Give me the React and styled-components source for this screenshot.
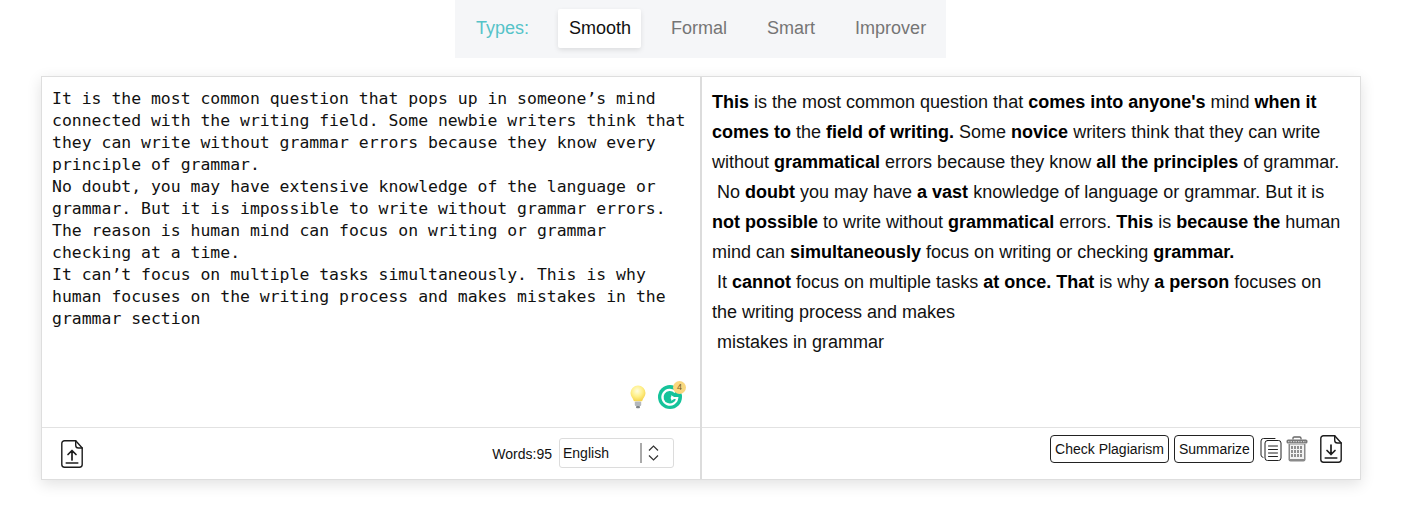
import React from "react";
import styled, { createGlobalStyle } from "styled-components";

const GlobalStyle = createGlobalStyle`
  html, body {
    margin: 0;
    padding: 0;
    background: #fff;
    font-family: "Liberation Sans", Arial, sans-serif;
  }
`;

const Page = styled.div`
  width: 1402px;
  height: 507px;
  overflow: hidden;
  display: flex;
  flex-direction: column;
  align-items: center;
`;

const TypeBar = styled.div`
  width: 491px;
  height: 58px;
  box-sizing: border-box;
  margin-right: 1px;
  background: #f5f6f8;
  display: flex;
  align-items: center;
  padding: 0 0 2px 21px;
  font-size: 18px;
`;

const TypeLabel = styled.span`
  color: #55c3c8;
  margin-right: 29px;
`;

const TypeTab = styled.button`
  border: 0;
  font: inherit;
  height: 39px;
  padding: 0 10px 0 11px;
  margin-right: 19px;
  border-radius: 2px;
  background: ${(p) => (p.$active ? "#fff" : "transparent")};
  color: ${(p) => (p.$active ? "#111" : "#757575")};
  box-shadow: ${(p) => (p.$active ? "0 2px 5px rgba(0,0,0,.1)" : "none")};
`;

const Editor = styled.div`
  width: 1320px;
  height: 404px;
  margin-top: 18px;
  box-sizing: border-box;
  border: 1px solid #dedede;
  background: #fff;
  box-shadow: 0 4px 14px rgba(0, 0, 0, 0.12);
  display: grid;
  grid-template-columns: 658px 1fr;
`;

const Pane = styled.div`
  display: flex;
  flex-direction: column;
  min-width: 0;
  border-left: ${(p) => (p.$right ? "2px solid #dcdcdc" : "none")};
`;

const Body = styled.div`
  height: 350px;
  box-sizing: border-box;
  position: relative;
`;

const Source = styled.div`
  padding: 11px 9px 0 10px;
  font-family: "DejaVu Sans Mono", monospace;
  font-size: 16.45px;
  line-height: 22px;
  color: #111;
`;

const Result = styled.div`
  padding: 10px 12px 0 10px;
  font-size: 18px;
  line-height: 30px;
  color: #111;
`;

const Para = styled.p`
  margin: 0;
  white-space: pre-wrap;
`;

const Changed = styled.b`
  color: #000;
`;

const Hint = styled.div`
  position: absolute;
  right: 18px;
  bottom: 18px;
  display: flex;
  align-items: center;
  gap: 12px;
`;

const GrammarBadge = styled.div`
  position: relative;
  width: 24px;
  height: 24px;
`;

const Count = styled.span`
  position: absolute;
  top: -4px;
  right: -4px;
  width: 13px;
  height: 13px;
  border-radius: 50%;
  background: #f9d77e;
  color: #7a5a1e;
  font-size: 9px;
  line-height: 13px;
  text-align: center;
`;

const Footer = styled.div`
  flex: 1;
  border-top: 1px solid #e2e2e2;
  display: flex;
  align-items: center;
  padding: ${(p) =>
    p.$right ? "0 18px 10px 0" : "0 26px 0 19px"};
  justify-content: ${(p) => (p.$right ? "flex-end" : "space-between")};
  font-size: 14px;
  color: #111;
`;

const WordRow = styled.div`
  display: flex;
  align-items: center;
  gap: 7px;
`;

const LangSelect = styled.div`
  width: 115px;
  height: 30px;
  box-sizing: border-box;
  margin-top: -2px;
  border: 1px solid #dcdcdc;
  border-radius: 3px;
  display: flex;
  align-items: center;
  padding-left: 3px;
`;

const LangText = styled.span`
  flex: 1;
`;

const LangSep = styled.span`
  width: 2px;
  height: 20px;
  background: #aaa;
`;

const LangArrows = styled.svg`
  margin: 0 14px 0 6px;
`;

const ActionButton = styled.button`
  height: 28px;
  width: ${(p) => (p.$width ? `${p.$width}px` : "auto")};
  box-sizing: border-box;
  padding: 1px 4px 0;
  margin-right: 5px;
  background: #fff;
  border: 1px solid #222;
  border-radius: 4px;
  font: inherit;
  color: #111;
`;

const IconSlot = styled.span`
  display: inline-flex;
  margin-left: ${(p) => p.$gap || 0}px;
`;

const FileIcon = ({ down }) => (
  <svg width="22" height="28" viewBox="0 0 22 28" fill="none" stroke="#1c1c1c" strokeWidth="1.4" strokeLinecap="round" strokeLinejoin="round">
    <path d="M3.5 .8h11.2L21.2 8v16.5a2.7 2.7 0 0 1-2.7 2.7h-15A2.7 2.7 0 0 1 .8 24.5v-21A2.7 2.7 0 0 1 3.5.8z" />
    <path d="M14.7 .8v4.4A2.8 2.8 0 0 0 17.5 8h3.7" />
    <path d="M5.2 23h11.6" strokeWidth="1.5" />
    {down ? (
      <path d="M11 10v9.5M7 15.5l4 4 4-4" strokeWidth="1.7" />
    ) : (
      <path d="M11 20v-9.5M7 14.5l4-4 4 4" strokeWidth="1.7" />
    )}
  </svg>
);

const CopyIcon = () => (
  <svg width="22" height="24" viewBox="0 0 22 24" fill="none" stroke="#222" strokeWidth="1" strokeLinecap="round" strokeLinejoin="round">
    <path d="M15 1.5H3.5A2.5 2.5 0 0 0 1 4v14a2.5 2.5 0 0 0 2 2.4" />
    <rect x="5" y="3.5" width="16" height="20" rx="2.5" fill="#fff" />
    <path d="M8.5 9h9M8.5 12.5h9M8.5 16h9M8.5 19.5h9" />
  </svg>
);

const TrashIcon = () => (
  <svg width="22" height="26" viewBox="0 0 22 26">
    <path d="M7 3.5V2.2C7 1.5 7.5 1 8.3 1h5.4c.8 0 1.3.5 1.3 1.2v1.3" fill="none" stroke="#666" strokeWidth="1.3" />
    <rect x=".5" y="3.5" width="21" height="4" rx="1.6" fill="#777" />
    <path d="M2 5.7h18" stroke="#ddd" strokeWidth="1" strokeDasharray="1.5 1" />
    <path d="M2.5 8h17v15.5a2 2 0 0 1-2 2h-13a2 2 0 0 1-2-2z" fill="#8a8a8a" />
    <path d="M4 8.5h14v14.5H4z" fill="#f2f2f2" />
    <path d="M6 10v11.5M9 10v11.5M12 10v11.5M15 10v11.5" stroke="#666" strokeWidth="1.4" strokeDasharray="3 1" />
  </svg>
);

const BulbIcon = () => (
  <svg width="16" height="24" viewBox="0 0 16 24">
    <defs>
      <radialGradient id="bulb" cx="45%" cy="35%" r="65%">
        <stop offset="0" stopColor="#fffde0" />
        <stop offset="0.55" stopColor="#fff08a" />
        <stop offset="1" stopColor="#f6d54e" />
      </radialGradient>
    </defs>
    <path d="M8 .5a7.5 7.5 0 0 0-7.5 7.5c0 3.2 2.6 5.2 3.4 8.2h8.2c.8-3 3.4-5 3.4-8.2A7.5 7.5 0 0 0 8 .5z" fill="url(#bulb)" />
    <rect x="4.8" y="16.5" width="6.4" height="4.6" rx="1" fill="#b5b9bd" />
    <rect x="6" y="21" width="4" height="2.2" rx="1" fill="#7f8488" />
  </svg>
);

const GrammarIcon = () => (
  <svg width="24" height="24" viewBox="0 0 24 24">
    <circle cx="12" cy="12" r="12" fill="#15c39a" />
    <path d="M17.3 7.2A7.4 7.4 0 1 0 19.2 13h-6.4" fill="none" stroke="#fff" strokeWidth="2.2" />
    <path d="M13.2 10.2v5.6l4.6-2.8z" fill="#fff" />
  </svg>
);

const tabs = ["Smooth", "Formal", "Smart", "Improver"];

function App() {
  return (
    <Page>
      <GlobalStyle />
      <TypeBar>
        <TypeLabel>Types:</TypeLabel>
        {tabs.map((t, i) => (
          <TypeTab key={t} $active={i === 0}>{t}</TypeTab>
        ))}
      </TypeBar>

      <Editor>
        <Pane>
          <Body>
            <Source>
              <Para>It is the most common question that pops up in someone’s mind connected with the writing field. Some newbie writers think that they can write without grammar errors because they know every principle of grammar.</Para>
              <Para>No doubt, you may have extensive knowledge of the language or grammar. But it is impossible to write without grammar errors. The reason is human mind can focus on writing or grammar checking at a time.</Para>
              <Para>It can’t focus on multiple tasks simultaneously. This is why human focuses on the writing process and makes mistakes in the grammar section</Para>
            </Source>
            <Hint>
              <BulbIcon />
              <GrammarBadge>
                <GrammarIcon />
                <Count>4</Count>
              </GrammarBadge>
            </Hint>
          </Body>
          <Footer>
            <FileIcon />
            <WordRow>
              <span>Words:95</span>
              <LangSelect>
                <LangText>English</LangText>
                <LangSep />
                <LangArrows width="11" height="18" viewBox="0 0 11 18" fill="none" stroke="#333" strokeWidth="1.2">
                  <path d="M1 6.5 5.5 2 10 6.5M1 11.5 5.5 16 10 11.5" />
                </LangArrows>
              </LangSelect>
            </WordRow>
          </Footer>
        </Pane>

        <Pane $right>
          <Body>
            <Result>
              <Para><Changed>This</Changed> is the most common question that <Changed>comes into anyone's</Changed> mind <Changed>when it comes to</Changed> the <Changed>field of writing.</Changed> Some <Changed>novice</Changed> writers think that they can write without <Changed>grammatical</Changed> errors because they know <Changed>all the principles</Changed> of grammar.</Para>
              <Para> No <Changed>doubt</Changed> you may have <Changed>a vast</Changed> knowledge of language or grammar. But it is <Changed>not possible</Changed> to write without <Changed>grammatical</Changed> errors. <Changed>This</Changed> is <Changed>because the</Changed> human mind can <Changed>simultaneously</Changed> focus on writing or checking <Changed>grammar.</Changed></Para>
              <Para> It <Changed>cannot</Changed> focus on multiple tasks <Changed>at once. That</Changed> is why <Changed>a person</Changed> focuses on the writing process and makes</Para>
              <Para> mistakes in grammar</Para>
            </Result>
          </Body>
          <Footer $right>
            <ActionButton>Check Plagiarism</ActionButton>
            <ActionButton $width={80}>Summarize</ActionButton>
            <IconSlot $gap={1}><CopyIcon /></IconSlot>
            <IconSlot $gap={4}><TrashIcon /></IconSlot>
            <IconSlot $gap={12}><FileIcon down /></IconSlot>
          </Footer>
        </Pane>
      </Editor>
    </Page>
  );
}

export default App;
